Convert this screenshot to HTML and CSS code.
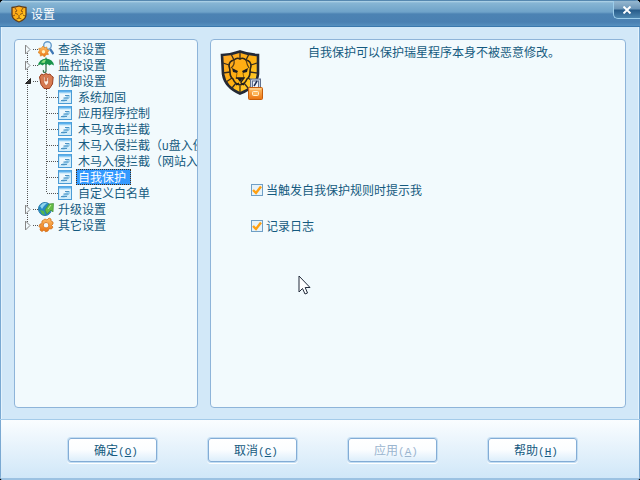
FILE: index.html
```html
<!DOCTYPE html>
<html lang="zh-CN">
<head>
<meta charset="utf-8">
<title>设置</title>
<link rel="stylesheet" href="styles.css">
</head>
<body>
<svg class="defs" width="0" height="0" aria-hidden="true">
  <defs>
    <linearGradient id="gold" x1="0" y1="0" x2="1" y2="1"><stop offset="0" stop-color="#ffa92c"/><stop offset=".5" stop-color="#ffae10"/><stop offset="1" stop-color="#ffdf3a"/></linearGradient>
    <linearGradient id="orange" x1="0" y1="0" x2="0" y2="1"><stop offset="0" stop-color="#ffc069"/><stop offset="1" stop-color="#ea7411"/></linearGradient>
    <symbol id="page" viewBox="0 0 14 14">
      <rect x=".5" y=".5" width="13" height="13" fill="#d3edfa" stroke="#4a9bd5"/>
      <path d="M1 1.500h12" stroke="#5cb2ee" stroke-width="2"/>
      <path d="M2 4h10v5l-8 3H2z" fill="#eef8fd"/>
      <path d="M2 11.500L10 5h2v3l-6 4z" fill="#a5d5f0"/>
      <path d="M7 5.500h4M5.500 8h5M3 10.500h6" stroke="#4d94c4" stroke-width="1.200"/>
    </symbol>
    <symbol id="closed" viewBox="0 0 8 16"><path d="M1.500 4v9l4.500-4.500z" fill="#f2fafd" stroke="#888"/></symbol>
    <symbol id="open" viewBox="0 0 8 16"><path d="M6.500 5.500v5h-5z" fill="#333" stroke="#222"/></symbol>
  </defs>
</svg>
<div class="window">
  <header class="titlebar">
    <svg class="logo" viewBox="0 0 16 18" aria-hidden="true">
      <path d="M1 2.500Q5 2 8 1q3 1 7 1.500v7q0 5-7 7.500-7-2.500-7-7.500z" fill="url(#gold)" stroke="#633d16" stroke-width="1.300"/>
      <path d="M4 3l2 3-2 1M12 3l-2 3 2 1M4 8l3 1.500M12 8L9 9.500M8 10v3M5.500 14l2.500-1 2.500 1M2 11l2-1M14 11l-2-1" fill="none" stroke="#7d4b11" stroke-width=".9"/>
    </svg>
    <h1>设置</h1>
    <button class="close" type="button" aria-label="关闭"><svg viewBox="0 0 10 8" width="10" height="8"><path d="M1.500.5l7 7M8.500.5l-7 7" stroke="#fff" stroke-width="1.900"/></svg></button>
  </header>
  <main class="content">
    <nav class="panel nav">
      <ul class="tree">
        <li><div class="row"><svg class="toggle"><use href="#closed"/></svg><span class="dots"></span>
          <svg class="icon" viewBox="0 0 16 16"><path d="M12 8l3.500 5" stroke="#3f77b5" stroke-width="2.200"/><circle cx="9.500" cy="4.500" r="3.800" fill="#e4f5ff" stroke="#689dcc" stroke-width="1.400"/><path d="M5 5l1.500 1.800 2.300-.8.200 2.400 2.200 1-1.600 1.800.8 2.300-2.500.2L6.500 16l-1.800-1.700-2.300.8-.2-2.400L0 11.500l1.500-1.800L.8 7.400l2.500-.2z" fill="url(#orange)" stroke="#d98521" stroke-width=".7"/><circle cx="5.500" cy="10.800" r="1.700" fill="#fff2bc"/></svg>
          <a href="#scan">查杀设置</a></div></li>
        <li><div class="row"><svg class="toggle"><use href="#closed"/></svg><span class="dots"></span>
          <svg class="icon" viewBox="0 0 16 16"><path d="M8 6v8q0 1.500-1.500 1.500T5.500 13" fill="none" stroke="#39724c" stroke-width="1.300"/><path d="M0 8.500Q1 2 8 1.500q7 .5 8 7l-2.500-1.300-2 1.300-2-1.500L8 8 6.500 7l-2 1.500-2-1.300z" fill="#19944b"/><path d="M3 5.500Q5 2.500 8 2.500L6.500 6z" fill="#8fe07f"/><path d="M8 .5v2" stroke="#147237"/></svg>
          <a href="#monitor">监控设置</a></div></li>
        <li><div class="row"><svg class="toggle"><use href="#open"/></svg><span class="dots"></span>
          <svg class="icon" viewBox="0 0 16 16"><path d="M1.500 4l2-3 2 .8L8 .5l2 1 2-.5 1.500 2 1.700 1-.7 7-3 4.500H6l-3-4z" fill="#d77a50" stroke="#9c4020"/><path d="M5.500 3.500l.5 6L8 13l2.500-3V3.500L9 5v3H7V4z" fill="#fff0e4" stroke="#b95c38" stroke-width=".6"/></svg>
          <a href="#defense">防御设置</a></div>
          <ul class="branch">
            <li class="row"><span class="dots"></span><svg class="leaf"><use href="#page"/></svg><a href="#harden">系统加固</a></li>
            <li class="row"><span class="dots"></span><svg class="leaf"><use href="#page"/></svg><a href="#apps">应用程序控制</a></li>
            <li class="row"><span class="dots"></span><svg class="leaf"><use href="#page"/></svg><a href="#attack">木马攻击拦截</a></li>
            <li class="row"><span class="dots"></span><svg class="leaf"><use href="#page"/></svg><a href="#usb">木马入侵拦截（<span class="latin">U</span>盘入侵</a></li>
            <li class="row"><span class="dots"></span><svg class="leaf"><use href="#page"/></svg><a href="#web">木马入侵拦截（网站入</a></li>
            <li class="row"><span class="dots"></span><svg class="leaf"><use href="#page"/></svg><a class="selected" href="#self" aria-current="page">自我保护</a></li>
            <li class="row"><span class="dots"></span><svg class="leaf"><use href="#page"/></svg><a href="#white">自定义白名单</a></li>
          </ul></li>
        <li><div class="row"><svg class="toggle"><use href="#closed"/></svg><span class="dots"></span>
          <svg class="icon" viewBox="0 0 16 16"><circle cx="7" cy="8" r="6.500" fill="#2589c4" stroke="#287aa9"/><path d="M2 5q3-4 7-3L6 5 4 8z" fill="#8fd5ec"/><path d="M2 9l4 1 1 4-3-1z" fill="#52b64e"/><path d="M7 9l4-6 4.500-.5L15 11l-2-2-4 4-1-2z" fill="#64bd47" stroke="#438f38" stroke-width=".7"/><path d="M10 8l3-4" stroke="#c9f39d"/></svg>
          <a href="#update">升级设置</a></div></li>
        <li><div class="row"><svg class="toggle"><use href="#closed"/></svg><span class="dots"></span>
          <svg class="icon" viewBox="0 0 16 16"><path fill-rule="evenodd" d="M7 2l2 1 2-2 2 1v2l2 1v2l-1.500 1.500L15 10l-1.500 2-2.500-.3L10 14l-2.500.8L6 13l-2 1.500-2-1.500.5-2L1 9.500 2 7l1.800-.3L4 4l1.500-1zM8 5.500a2.700 2.700 0 1 0 .1 0z" fill="url(#orange)" stroke="#d0711d" stroke-width=".8"/></svg>
          <a href="#other">其它设置</a></div></li>
      </ul>
    </nav>
    <section class="panel detail">
      <div class="intro">
        <svg class="shield" viewBox="0 0 45 51" aria-hidden="true">
          <path d="M2 5Q12 4.500 20 1.500 28 4.500 38 5v19Q37 37 20 43.500 5 37 3 24z" fill="url(#gold)" stroke="#242936" stroke-width="2.600"/>
          <path d="M20 2v6M11 4l3 6M29 4l-3 6M3 13l6 2M37 13l-6 2M3 23l7-1M37 23l-7-1M6 32l6-4M34 32l-6-4M12 38l4-5M28 38l-4-5M20 36v7" fill="none" stroke="#362d22" stroke-width="1.300"/>
          <path d="M20 9q-3-2-6 1-5 1-5 6 1 3 1 6 0 5 3 7 2 5 7 6 5-1 7-6 3-2 3-7 0-3 1-6 0-5-5-6-3-3-6-1z" fill="none" stroke="#2e2618" stroke-width="1.600"/>
          <path d="M14 10q1 5-3 8M26 10q1 5 3 8" fill="none" stroke="#5a3e14" stroke-width="1.200"/>
          <path d="M12 18l6 3-1 2-4-1zM28 18l-6 3 1 2 4-1z" fill="#1b1b20"/>
          <path d="M17 23l-1 6M23 23l1 6" stroke="#94600b"/>
          <path d="M16 28h8l-3 4v1l3 2M19 33l-3 2" fill="none" stroke="#1b1b20" stroke-width="1.300"/><path d="M17 28h6l-3 4z" fill="#1b1b20"/>
          <path d="M31.500 39v-9h8v9" fill="#eef3fa" stroke="#62718f" stroke-width="3"/><path d="M31.500 39v-9h8v9" fill="none" stroke="#cbd5e4" stroke-width="1"/><path d="M34 36l3-5" stroke="#1d2c50" stroke-width="1.500"/>
          <rect x="28.500" y="37.500" width="14" height="12" rx="1" fill="url(#orange)" stroke="#c65d0b"/>
          <path d="M30 39h11" stroke="#ffe0a8"/><rect x="32.500" y="41.500" width="6" height="4" rx="1" fill="#ffb75c" stroke="#fff0d0"/>
        </svg>
        <p>自我保护可以保护瑞星程序本身不被恶意修改。</p>
      </div>
      <div class="options">
        <label><input type="checkbox" checked><span>当触发自我保护规则时提示我</span></label>
        <label><input type="checkbox" checked><span>记录日志</span></label>
      </div>
    </section>
  </main>
  <footer class="actions">
    <button type="button">确定<span class="latin">(<u>O</u>)</span></button>
    <button type="button">取消<span class="latin">(<u>C</u>)</span></button>
    <button type="button" disabled>应用<span class="latin">(<u>A</u>)</span></button>
    <button type="button">帮助<span class="latin">(<u>H</u>)</span></button>
  </footer>
</div>
<svg class="cursor" viewBox="0 0 13 20" width="13" height="20" aria-hidden="true"><path d="M1 1v16l3.500-3.500L7 19l2.500-1-2.300-5.500H12z" fill="#fff" stroke="#222b3b"/></svg>
</body>
</html>
```
FILE: styles.css
```css
* { box-sizing: border-box; }

body {
  margin: 0;
  background: #000;
  color: #155a80;
  font: 12px/16px "Noto Sans CJK SC", sans-serif;
}

.defs { position: absolute; }

.window {
  display: flex;
  flex-direction: column;
  min-height: 100vh;
  overflow: hidden;
  border-radius: 5px 5px 4px 4px;
  background: #d2e8f8;
  box-shadow: inset 1px 0 #7aa9d2, inset -1px 0 #7aa9d2, inset 2px 0 #e4f3fd, inset -2px 0 #e4f3fd;
}

.titlebar {
  display: flex;
  align-items: center;
  gap: 4px;
  height: 27px;
  padding-left: 11px;
  border-top: 1px solid #5688b0;
  border-bottom: 1px solid #3a78ad;
  background: linear-gradient(#b5d7ea 0, #86b5d4 2px, #6fa3c9 11px, #4c83b3 13px, #4a80b2 21px, #5690c0);
}

.logo { width: 16px; height: 18px; }

h1 {
  flex: 1;
  margin: 0;
  color: #fff;
  font-size: 12px;
  font-weight: 400;
}

.close {
  display: flex;
  align-items: center;
  justify-content: center;
  align-self: flex-start;
  width: 27px;
  height: 18px;
  padding: 0;
  border: 1px solid #9ccdea;
  border-top: 0;
  border-right: 0;
  border-radius: 0 0 0 5px;
  background: linear-gradient(#96b8d0, #6c96b8 8px, #265b89 9px, #4d87b0);
}

.content {
  display: grid;
  grid-template-columns: 184px 1fr;
  gap: 12px;
  flex: 1;
  padding: 12px 14px 11px;
}

.panel {
  min-width: 0;
  overflow: hidden;
  border: 1px solid #8eb4d9;
  border-radius: 4px;
  background: #f2fafd;
}

.nav { padding: 1px 0 0 9px; }

.tree, .branch {
  margin: 0;
  padding: 0;
  list-style: none;
}

.tree {
  background: repeating-linear-gradient(#555 0 1px, transparent 1px 2px) 3px 8px / 1px 176px no-repeat;
}

.branch {
  margin-left: 22px;
  background: repeating-linear-gradient(#555 0 1px, transparent 1px 2px) 0 0 / 1px 104px no-repeat;
}

.row {
  display: flex;
  align-items: center;
  height: 16px;
  white-space: nowrap;
}

.row > * { flex: none; }

.toggle { width: 8px; height: 16px; }

.dots {
  width: 6px;
  height: 1px;
  background: repeating-linear-gradient(90deg, transparent 0 1px, #555 1px 2px);
}

.branch .dots { width: 12px; }

.icon { width: 16px; height: 16px; }

.leaf { width: 14px; height: 14px; }

.row a {
  margin-left: 4px;
  color: inherit;
  text-decoration: none;
}

.branch a {
  padding: 0 5px 0 2px;
}

.row .selected {
  background: #3399ff;
  color: #fff;
  outline: 1px dotted #4b3212;
  outline-offset: -1px;
}

.latin {
  font-family: "Liberation Mono", monospace;
  font-size: 11px;
  line-height: 12px;
}

.detail { padding: 4px 9px; }

.intro { display: flex; gap: 12px; }

.shield { width: 45px; height: 51px; margin-top: 6px; }

.intro p {
  flex: 1;
  margin: 0;
  padding-left: 31px;
}

.options {
  display: flex;
  flex-direction: column;
  align-items: flex-start;
  gap: 20px;
  padding: 81px 0 0 31px;
}

.options label {
  display: flex;
  align-items: center;
  gap: 3px;
}

.options input {
  width: 12px;
  height: 12px;
  margin: 0;
  appearance: none;
  border: 1px solid #6f9fc6;
  background: #f3f9fd;
}

.options input:checked {
  background: #e6f3fb url("data:image/svg+xml,%3Csvg xmlns='http://www.w3.org/2000/svg' viewBox='0 0 10 10'%3E%3Cpath d='M1 5l3 3 5-6.500' fill='none' stroke='%23ffa012' stroke-width='2.400'/%3E%3C/svg%3E");
}

.actions {
  display: flex;
  justify-content: center;
  gap: 51px;
  height: 61px;
  padding: 18px 0 0 5px;
  border-top: 1px solid #a4cbe9;
  border-bottom: 2px solid #9cc2e2;
  background: linear-gradient(#fafdff, #d0e7f8);
  box-shadow: inset 1px 0 #7aa9d2, inset -1px 0 #7aa9d2;
}

.actions button {
  width: 89px;
  height: 24px;
  padding: 0 0 0 7px;
  border: 1px solid #83acd5;
  border-radius: 3px;
  background: linear-gradient(#fff, #fbfdff 50%, #ddeefb);
  box-shadow: 0 0 0 1px #c3def3, 0 1px 0 1px #fff;
  color: #155a80;
  font: inherit;
}

.actions button:disabled { color: #9bb5cf; }

.cursor {
  position: absolute;
  left: 298px;
  top: 275px;
}
```
